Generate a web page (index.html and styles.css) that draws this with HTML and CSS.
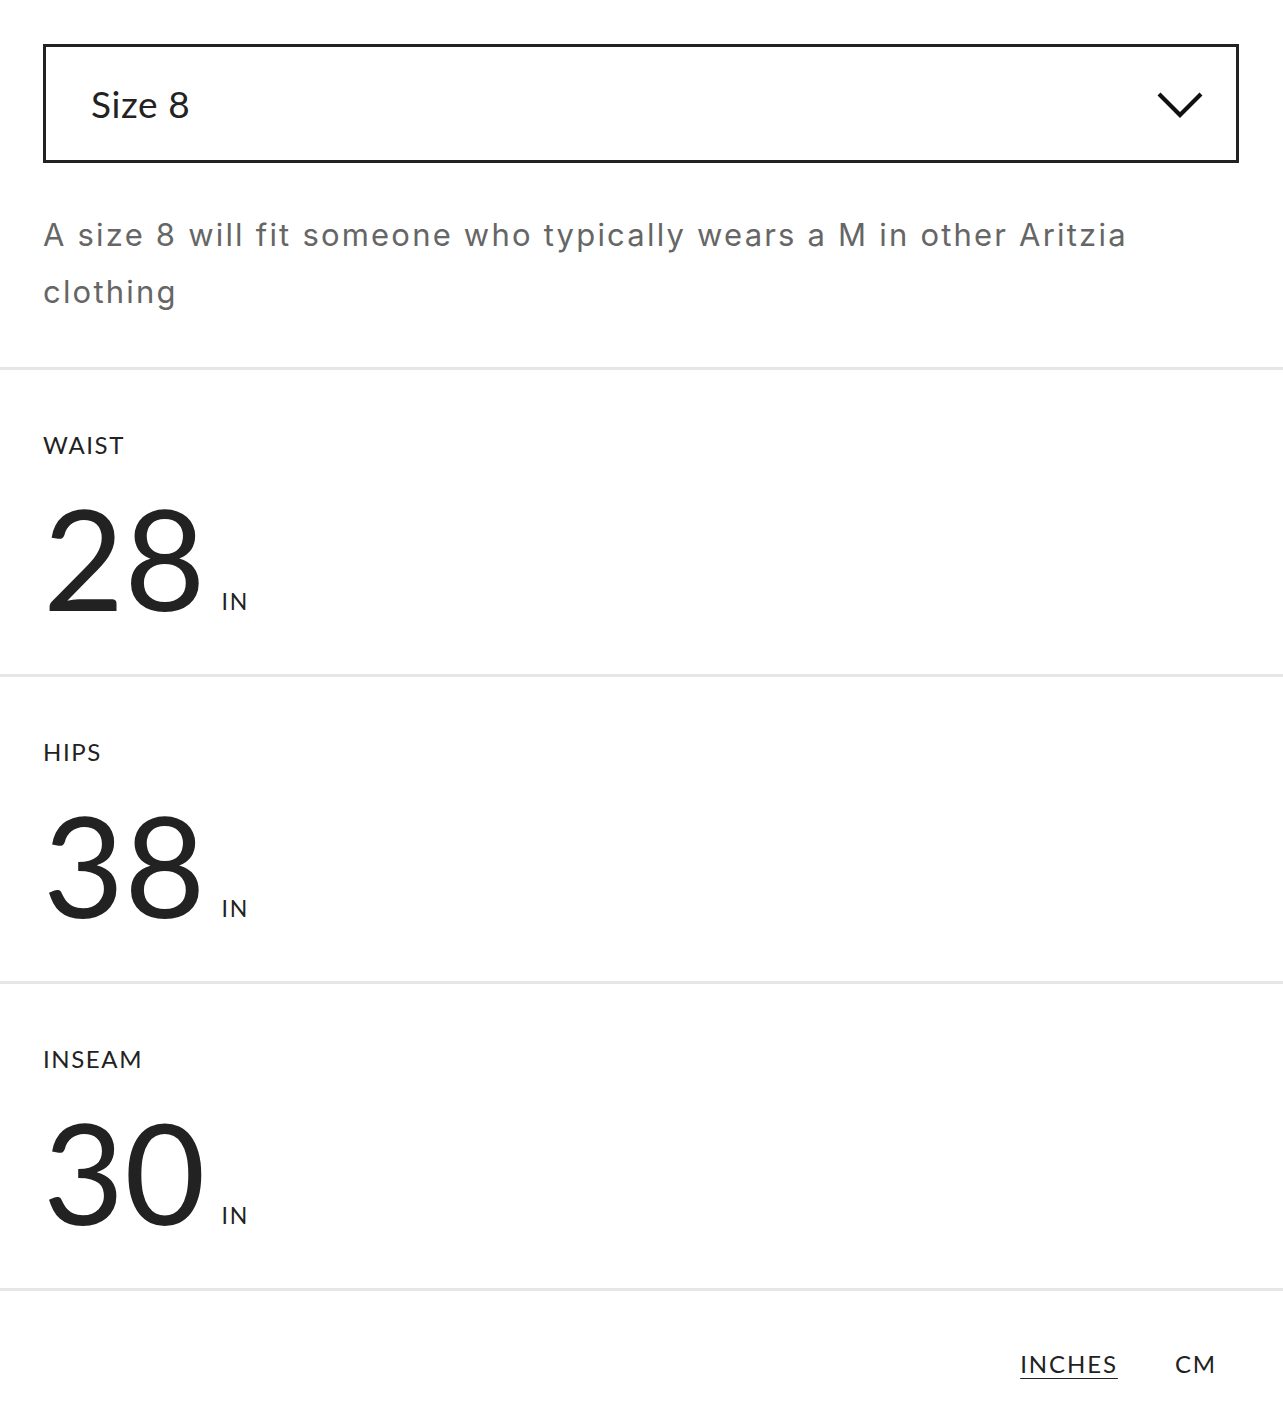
FILE: index.html
```html
<!DOCTYPE html>
<html lang="en">
<head>
<meta charset="utf-8">
<title>Size guide</title>
<link rel="stylesheet" href="styles.css">
</head>
<body>
<div class="page">
  <div class="top">
    <div class="select">
      <span class="select-value">Size 8</span>
      <svg class="chevron" width="48" height="28" viewBox="0 0 48 28" aria-hidden="true">
        <polyline points="3,3 24,24 45,3" fill="none" stroke="#111" stroke-width="4.2" stroke-linecap="butt" stroke-linejoin="miter"/>
      </svg>
    </div>
    <p class="desc">A size 8 will fit someone who typically wears a M in other Aritzia clothing</p>
  </div>
  <section class="measure">
    <div class="label">WAIST</div>
    <div class="value-row"><span class="value">28</span><span class="unit">IN</span></div>
  </section>
  <section class="measure">
    <div class="label">HIPS</div>
    <div class="value-row"><span class="value">38</span><span class="unit">IN</span></div>
  </section>
  <section class="measure">
    <div class="label">INSEAM</div>
    <div class="value-row"><span class="value">30</span><span class="unit">IN</span></div>
  </section>
  <div class="units">
    <span class="unit-toggle active">INCHES</span>
    <span class="unit-toggle">CM</span>
  </div>
</div>
</body>
</html>
```

FILE: styles.css
```css
* { box-sizing: border-box; }
html, body { margin: 0; padding: 0; background: #fff; }
body {
  font-family: "Lato", "Noto Sans", sans-serif;
  color: #222;
}
.page { width: 1283px; }
.top {
  padding: 44px 44px 0 43px;
}
.select {
  height: 119px;
  border: 3px solid #222;
  display: flex;
  align-items: center;
  justify-content: space-between;
  padding: 0 32px 0 45px;
}
.select-value {
  font-size: 37px;
  color: #222;
  letter-spacing: 0.6px;
}
.chevron { display: block; margin-top: 2px; }
.desc {
  margin: 43px 0 0 0;
  padding-bottom: 47px;
  font-family: "Inter", "Lato", sans-serif;
  font-size: 31px;
  line-height: 57px;
  color: #666;
  letter-spacing: 2.2px;
}
.measure {
  border-top: 3px solid #e6e6e6;
  height: 307px;
  padding: 60px 43px 0;
}
.label {
  font-size: 24px;
  line-height: 30px;
  letter-spacing: 1.6px;
  color: #222;
}
.value-row {
  display: flex;
  align-items: baseline;
  gap: 16px;
  margin-top: 22px;
}
.value {
  font-size: 140px;
  line-height: 150px;
  color: #222;
}
.unit {
  font-size: 23px;
  letter-spacing: 2px;
  color: #222;
  position: relative;
  top: -1px;
}
.units {
  border-top: 3px solid #e6e6e6;
  display: flex;
  justify-content: flex-end;
  gap: 57px;
  padding: 58px 66px 0 0;
}
.unit-toggle {
  font-size: 24px;
  letter-spacing: 1.9px;
  color: #222;
  line-height: 30px;
}
.unit-toggle.active {
  text-decoration: underline;
  text-decoration-thickness: 2px;
  text-underline-offset: 5px;
}
```
